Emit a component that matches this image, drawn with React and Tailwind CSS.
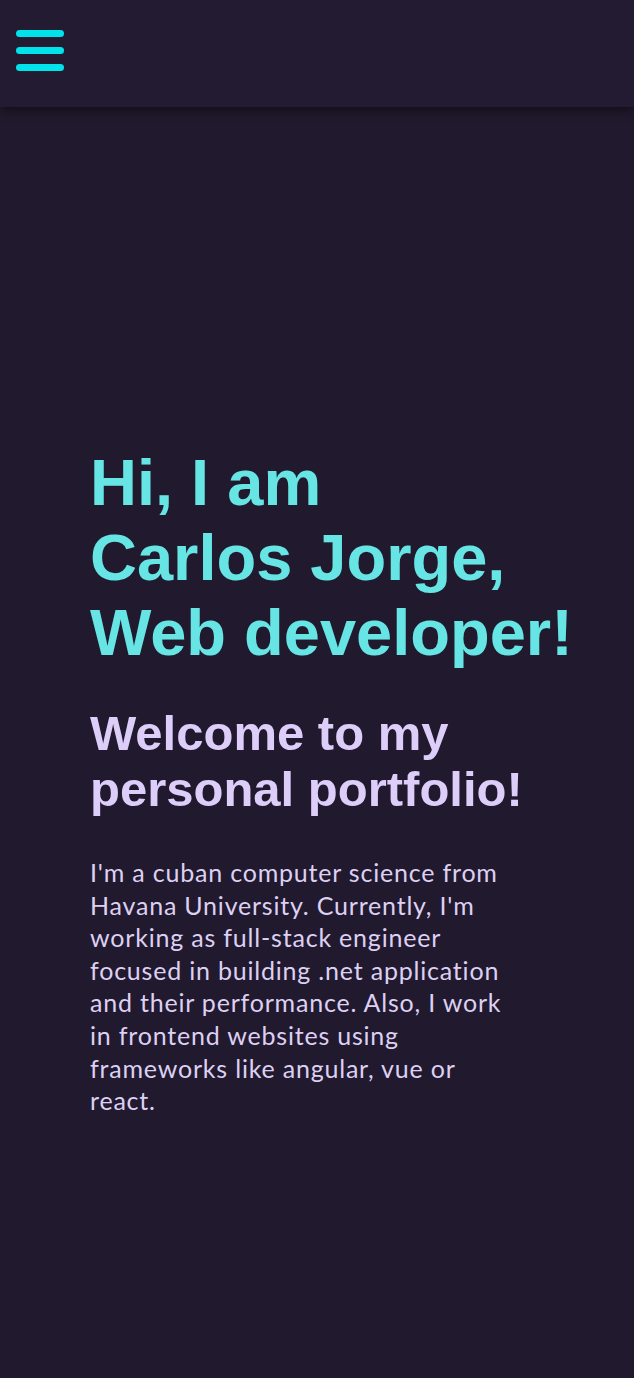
export default function App() {
  return (
    <div className="min-h-[1378px] w-full bg-[#211a2e]">
      <header className="relative z-10 flex h-[107px] items-start bg-[#231b31] px-4 pt-[30px] shadow-[0_4px_10px_rgba(0,0,0,0.45)]">
        <button className="flex w-12 flex-col gap-[10px]" aria-label="menu">
          <span className="block h-[7px] w-12 rounded-full bg-[#00e3ea]" />
          <span className="block h-[7px] w-12 rounded-full bg-[#00e3ea]" />
          <span className="block h-[7px] w-12 rounded-full bg-[#00e3ea]" />
        </button>
      </header>
      <main className="px-[90px] pt-[338px]">
        <h1 className="whitespace-nowrap font-['Liberation_Sans',Arial,sans-serif] text-[65px] font-bold leading-[75px] text-[#66e5e4]">
          Hi, I am
          <br />
          Carlos Jorge,
          <br />
          Web developer!
        </h1>
        <h2 className="mt-[35px] whitespace-nowrap font-['Liberation_Sans',Arial,sans-serif] text-[49px] font-bold leading-[56px] text-[#ddcdf9]">
          Welcome to my
          <br />
          personal portfolio!
        </h2>
        <p className="mt-[39px] w-[420px] font-['Lato',sans-serif] text-[25px] leading-[32.6px] tracking-[0.8px] text-[#ddd0f3]">
          I'm a cuban computer science from Havana University. Currently, I'm working as full-stack engineer focused in building .net application and their performance. Also, I work in frontend websites using frameworks like angular, vue or react.
        </p>
      </main>
    </div>
  );
}
